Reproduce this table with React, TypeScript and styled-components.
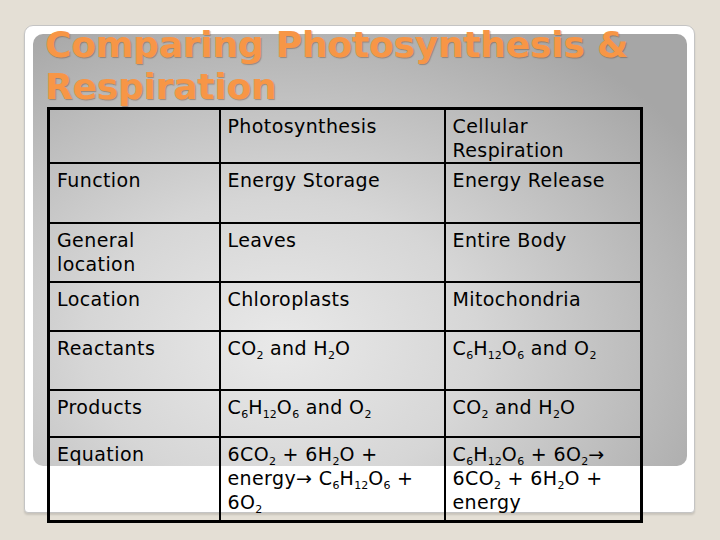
import React from "react";
import styled, { createGlobalStyle } from "styled-components";

const GlobalStyle = createGlobalStyle`
  html, body {
    margin: 0;
    padding: 0;
    background: #e4dfd5;
    width: 720px;
    height: 540px;
    overflow: hidden;
  }
`;

const Slide = styled.div`
  width: 720px;
  height: 540px;
  padding-top: 25px;
  padding-left: 24px;
  box-sizing: border-box;
  font-family: "DejaVu Sans", Verdana, sans-serif;
`;

const Card = styled.div`
  width: 671px;
  height: 488px;
  box-sizing: border-box;
  background: #ffffff;
  border: 1px solid #c4c4c4;
  border-radius: 9px 9px 4px 4px;
  box-shadow: 0 2px 2px rgba(0, 0, 0, 0.12);
  padding: 8px 7px 0 8px;
`;

const Panel = styled.div`
  display: flow-root;
  height: 432px;
  border-radius: 10px;
  background: radial-gradient(
    ellipse 75% 85% at 38% 72%,
    #e9e9e9 0%,
    #d6d6d6 40%,
    #bdbdbd 72%,
    #a6a6a6 100%
  );
  padding: 0 0 0 12px;
`;

const Title = styled.h1`
  margin: -10px 0 0 0;
  font-family: "DejaVu Sans", Verdana, sans-serif;
  font-weight: bold;
  font-size: 36px;
  line-height: 42px;
  letter-spacing: -0.2px;
  color: #f79646;
  text-shadow: 1px 1px 1px rgba(90, 50, 20, 0.35);
`;

const Table = styled.table`
  margin: -1px 0 0 2px;
  border-collapse: collapse;
  border: 3px solid #000;
  table-layout: fixed;
  width: 596px;
  font-size: 19px;
  line-height: 24px;
  letter-spacing: 0.4px;
  color: #000;
`;

const Cell = styled.td<{ $h: number; $w?: number }>`
  border: 2px solid #000;
  height: ${(p) => p.$h}px;
  ${(p) => (p.$w ? `width: ${p.$w}px;` : "")}
  padding: 4px 6px 0 7px;
  vertical-align: top;
  box-sizing: border-box;
  white-space: nowrap;
`;

const Sub = styled.sub`
  font-size: 11px;
  line-height: 0;
  letter-spacing: 0;
  vertical-align: -4px;
`;

const rows: { label: React.ReactNode; a: React.ReactNode; b: React.ReactNode; h: number }[] = [
  { label: "Function", a: "Energy Storage", b: "Energy Release", h: 60 },
  { label: <>General<br />location</>, a: "Leaves", b: "Entire Body", h: 59 },
  { label: "Location", a: "Chloroplasts", b: "Mitochondria", h: 49 },
  {
    label: "Reactants",
    a: <>CO<Sub>2</Sub> and H<Sub>2</Sub>O</>,
    b: <>C<Sub>6</Sub>H<Sub>12</Sub>O<Sub>6</Sub> and O<Sub>2</Sub></>,
    h: 59,
  },
  {
    label: "Products",
    a: <>C<Sub>6</Sub>H<Sub>12</Sub>O<Sub>6</Sub> and O<Sub>2</Sub></>,
    b: <>CO<Sub>2</Sub> and H<Sub>2</Sub>O</>,
    h: 47,
  },
  {
    label: "Equation",
    a: (
      <>
        6CO<Sub>2</Sub> + 6H<Sub>2</Sub>O +<br />
        energy→ C<Sub>6</Sub>H<Sub>12</Sub>O<Sub>6</Sub> +<br />
        6O<Sub>2</Sub>
      </>
    ),
    b: (
      <>
        C<Sub>6</Sub>H<Sub>12</Sub>O<Sub>6</Sub> + 6O<Sub>2</Sub>→<br />
        6CO<Sub>2</Sub> + 6H<Sub>2</Sub>O +<br />
        energy
      </>
    ),
    h: 84,
  },
];

export default function App() {
  return (
    <>
      <GlobalStyle />
      <Slide>
        <Card>
          <Panel>
            <Title>
              Comparing Photosynthesis &amp;
              <br />
              Respiration
            </Title>
            <Table>
              <tbody>
                <tr>
                  <Cell $h={54} $w={171}></Cell>
                  <Cell $h={54} $w={225}>Photosynthesis</Cell>
                  <Cell $h={54}>
                    Cellular
                    <br />
                    Respiration
                  </Cell>
                </tr>
                {rows.map((r, i) => (
                  <tr key={i}>
                    <Cell $h={r.h}>{r.label}</Cell>
                    <Cell $h={r.h}>{r.a}</Cell>
                    <Cell $h={r.h}>{r.b}</Cell>
                  </tr>
                ))}
              </tbody>
            </Table>
          </Panel>
        </Card>
      </Slide>
    </>
  );
}
